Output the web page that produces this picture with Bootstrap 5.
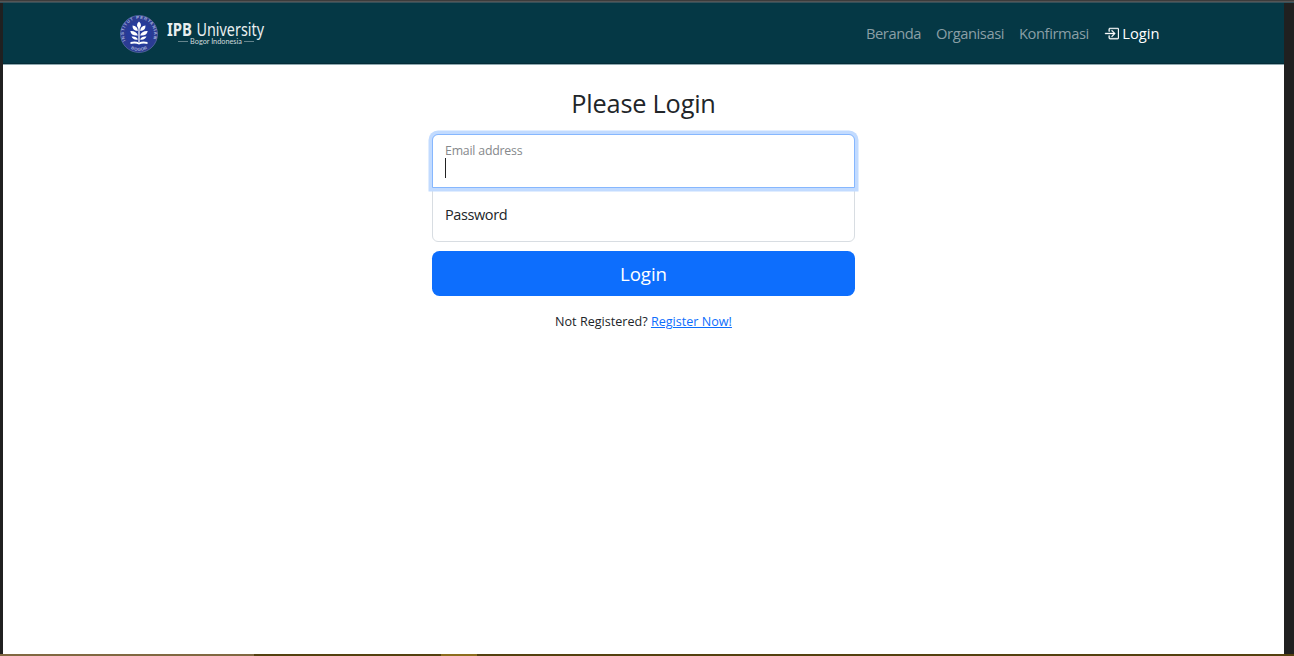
<!DOCTYPE html>
<html lang="id">
<head>
<meta charset="utf-8">
<meta name="viewport" content="width=device-width, initial-scale=1">
<title>Login | IPB University</title>
<link href="https://cdn.jsdelivr.net/npm/bootstrap@5.3.0/dist/css/bootstrap.min.css" rel="stylesheet">
<style>
body{font-family:"Open Sans","Noto Sans",sans-serif;font-size:14.5px;background:#202020;height:656px;overflow:hidden}
.top-edge{height:3px;background:linear-gradient(#3c3c3c 0 1px,#555 1px 2px,#34505a 2px)}
.page{margin:0 10px 0 3px;height:651px}
.site-nav{--bs-navbar-padding-y:0;height:61px;background:#053845;border-bottom:1px solid #042c37;box-shadow:0 1px 0 #8fa9b0}
.nav-inner{width:1039.500px;margin-left:117px}
.site-nav .nav-link{padding:0;line-height:22px;color:#8a9fa5;font-size:14.7px;letter-spacing:-.42px}
.site-nav .nav-link.active{color:#fff}
.brand-name{font-family:"Noto Sans",sans-serif;width:98px;height:25px;overflow:visible}
.brand-name text{font-size:17.5px;fill:#e9eff0}
.brand-place{font:7.3px/9px "Lato",sans-serif;color:#cfdadc;width:98px;margin-top:-5px}
.brand-place i{width:10px;height:1px;background:#65848c}
.login-box{width:423px;padding-top:23px}
.login-box h1{font-size:25.3px;line-height:33px;margin-bottom:14px;font-weight:400;letter-spacing:-.2px}
.login-box .form-floating>.form-control{height:54.500px;min-height:54px;padding:12px;font-size:14.5px;border-color:#d8dde2}
.login-box .form-floating>label{font-size:14.5px;line-height:22px;padding:15px 12px;height:54px;letter-spacing:-.4px}
.login-box .form-floating>.email-field{border-color:#86b7fe;box-shadow:0 0 0 3.5px #c2dbff;border-radius:6px 6px 0 0;height:54px}
.login-box .form-floating>.email-label{font-size:12.3px;line-height:16px;padding:8px 12px;color:#86898c;transform:none;letter-spacing:-.2px}
.pass-row{margin-top:-.5px}
.login-box .form-floating>.pass-field{border-radius:0 0 6px 6px}
.caret{left:12.500px;top:24px;width:1px;height:20px;background:#222;z-index:6}
.login-btn{height:45px;margin-top:9px;padding:2px 0 0;font-size:18.7px;letter-spacing:-.1px;border-radius:7.5px;border:0;background:#0d6efd}
.foot-text{font-size:12.6px;line-height:18px;margin-top:17px}
.bottom-edge{height:2px;background:linear-gradient(90deg,#806841 0 254px,#54400f 254px 441px,#8c6d1d 441px 477px,#54400f 477px)}
.emblem{font:4.3px "Liberation Sans",sans-serif;font-weight:700}
</style>
</head>
<body>
<div class="top-edge"></div>
<div class="page bg-white">
<nav class="navbar site-nav">
<div class="nav-inner d-flex align-items-center justify-content-between">
<a class="d-flex text-decoration-none align-items-center pt-1" href="#">
<svg class="emblem" width="38" height="38" viewBox="0 0 38 38" style="margin-bottom:3px">
<defs><path id="ringTop" d="M7.100 28.300A15.1 15.1 0 1 1 30.900 28.300"/><path id="ringBottom" d="M8 31.800A17 17 0 0 0 30 31.800"/></defs>
<circle cx="19" cy="19" r="18.5" fill="#2b3c93" stroke="#6371ad" stroke-width=".7"/>
<circle cx="19" cy="19" r="12.7" fill="#263b9b"/>
<text fill="#a9b4dc"><textPath href="#ringTop" startOffset="3" textLength="59">INSTITUT PERTANIAN</textPath></text>
<text fill="#a9b4dc"><textPath href="#ringBottom" startOffset="3.500" textLength="17">BOGOR</textPath></text>
<g fill="#fff"><path d="M19 6.500q4 3.500 0 7.500q-4-4 0-7.500ZM17.800 16q-5.500-.4-5.300-5.500q5.300.5 5.300 5.500ZM20.200 16q5.500-.4 5.300-5.500q-5.300.5-5.300 5.500ZM17.900 20.500q-6.700.7-7.600-4.500q6-.4 7.600 4.500ZM20.100 20.500q6.700.7 7.600-4.500q-6-.4-7.600 4.500ZM18 24.500q-5 .8-6.500-3q4.900-.6 6.500 3ZM20 24.500q5 .8 6.500-3q-4.900-.6-6.500 3Z"/><path d="M18.400 13h1.200v14h-1.200zM10.500 27q5-1.500 8.500.6q3.500-2.100 8.500-.6v2q-5-1-8.500.6q-3.500-1.600-8.500-.6z"/></g>
</svg>
<span class="d-flex flex-column" style="margin-left:9px;margin-bottom:8px">
<svg class="brand-name" viewBox="0 0 98 25"><text y="18.500" font-weight="700" textLength="25" lengthAdjust="spacingAndGlyphs">IPB</text><text x="29.500" y="18.500" textLength="67.500" lengthAdjust="spacingAndGlyphs">University</text></svg>
<span class="brand-place d-flex align-items-center justify-content-center" style="gap:2px"><i></i>Bogor Indonesia<i></i></span>
</span>
</a>
<div class="d-flex align-items-center" style="gap:15px">
<a class="nav-link" href="#">Beranda</a><a class="nav-link" href="#">Organisasi</a><a class="nav-link" href="#">Konfirmasi</a>
<a class="nav-link active d-flex align-items-center" style="gap:3.5px" href="#"><svg width="15" height="15" viewBox="0 0 16 16" fill="currentColor" stroke="currentColor" stroke-width=".4"><path fill-rule="evenodd" d="M6 3.500a.5.5 0 0 1 .5-.5h8a.5.5 0 0 1 .5.5v9a.5.5 0 0 1-.5.5h-8a.5.5 0 0 1-.5-.5v-2a.5.5 0 0 0-1 0v2A1.500 1.500 0 0 0 6.500 14h8a1.500 1.500 0 0 0 1.500-1.500v-9A1.500 1.500 0 0 0 14.500 2h-8A1.500 1.500 0 0 0 5 3.500v2a.5.5 0 0 0 1 0z"/><path fill-rule="evenodd" d="M11.854 8.354a.5.5 0 0 0 0-.708l-3-3a.5.5 0 1 0-.708.708L10.293 7.500H1.500a.5.5 0 0 0 0 1h8.793l-2.147 2.146a.5.5 0 0 0 .708.708z"/></svg><span style="letter-spacing:0">Login</span></a>
</div>
</div>
</nav>
<main class="login-box mx-auto">
<h1 class="text-center">Please Login</h1>
<form>
<div class="form-floating position-relative" style="z-index:2"><input type="email" class="form-control email-field" id="email" placeholder="name@example.com"><label class="email-label" for="email">Email address</label><span class="caret position-absolute"></span></div>
<div class="form-floating pass-row"><input type="password" class="form-control pass-field" id="password" placeholder="Password"><label for="password">Password</label></div>
<button class="btn btn-primary w-100 login-btn d-block" type="button">Login</button>
</form>
<div class="foot-text text-center">Not Registered? <a href="#">Register Now!</a></div>
</main>
</div>
<div class="bottom-edge"></div>
<script src="https://cdn.jsdelivr.net/npm/bootstrap@5.3.0/dist/js/bootstrap.bundle.min.js"></script>
</body>
</html>
